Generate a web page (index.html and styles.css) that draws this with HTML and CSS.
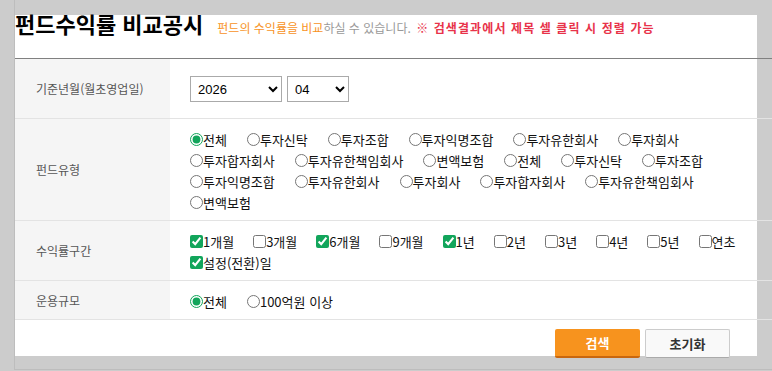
FILE: index.html
```html
<!DOCTYPE html>
<html lang="ko">
<head>
  <meta charset="UTF-8">
  <meta name="viewport" content="width=device-width, initial-scale=1.0">
  <title>펀드수익률 비교공시</title>
  <link rel="stylesheet" href="styles.css">
</head>
<body>
  <div class="frame">
    <div class="panel">
      <div class="head">
        <h1>펀드수익률 비교공시</h1>
        <p class="desc"><span class="hl">펀드의 수익률을 비교</span>하실 수 있습니다. <strong class="note">※ 검색결과에서 제목 셀 클릭 시 정렬 가능</strong></p>
      </div>

      <table class="search-table">
        <tbody>
          <tr class="row-date">
            <th>기준년월(월초영업일)</th>
            <td>
              <div class="selects">
                <select class="sel-year">
                  <option>2026</option>
                  <option>2025</option>
                </select>
                <select class="sel-month">
                  <option>04</option>
                  <option>03</option>
                </select>
              </div>
            </td>
          </tr>
          <tr>
            <th>펀드유형</th>
            <td>
              <div class="opts">
                <label><input type="radio" name="type" checked>전체</label>
                <label><input type="radio" name="type">투자신탁</label>
                <label><input type="radio" name="type">투자조합</label>
                <label><input type="radio" name="type">투자익명조합</label>
                <label><input type="radio" name="type">투자유한회사</label>
                <label><input type="radio" name="type">투자회사</label>
                <label><input type="radio" name="type">투자합자회사</label>
                <label><input type="radio" name="type">투자유한책임회사</label>
                <label><input type="radio" name="type">변액보험</label>
                <label><input type="radio" name="type">전체</label>
                <label><input type="radio" name="type">투자신탁</label>
                <label><input type="radio" name="type">투자조합</label>
                <label><input type="radio" name="type">투자익명조합</label>
                <label><input type="radio" name="type">투자유한회사</label>
                <label><input type="radio" name="type">투자회사</label>
                <label><input type="radio" name="type">투자합자회사</label>
                <label><input type="radio" name="type">투자유한책임회사</label>
                <label><input type="radio" name="type">변액보험</label>
              </div>
            </td>
          </tr>
          <tr>
            <th>수익률구간</th>
            <td>
              <div class="opts opts-check">
                <label><input type="checkbox" checked>1개월</label>
                <label><input type="checkbox">3개월</label>
                <label><input type="checkbox" checked>6개월</label>
                <label><input type="checkbox">9개월</label>
                <label><input type="checkbox" checked>1년</label>
                <label><input type="checkbox">2년</label>
                <label><input type="checkbox">3년</label>
                <label><input type="checkbox">4년</label>
                <label><input type="checkbox">5년</label>
                <label><input type="checkbox">연초</label>
                <label><input type="checkbox" checked>설정(전환)일</label>
              </div>
            </td>
          </tr>
          <tr>
            <th>운용규모</th>
            <td>
              <div class="opts">
                <label><input type="radio" name="size" checked>전체</label>
                <label><input type="radio" name="size">100억원 이상</label>
              </div>
            </td>
          </tr>
        </tbody>
      </table>

      <div class="btns">
        <button type="button" class="btn-search">검색</button>
        <button type="button" class="btn-reset">초기화</button>
      </div>
    </div>
  </div>
</body>
</html>
```

FILE: styles.css
```css
body { margin: 0; background-color: #cccccc; font-family: "Noto Sans CJK KR", "Noto Sans", sans-serif; color: #222; overflow: hidden; }
.frame { margin-left: 14px; height: 354px; padding-top: 15px; border-left: 1px solid #bdbdbd; border-bottom: 1px solid #bdbdbd; }
.panel { width: 742px; height: 341px; background-color: #fff; }

/* 타이틀 */
.head { display: flex; align-items: baseline; height: 43px; border-bottom: 1px solid #808080; width: 757px; }
.head h1 { margin: -7px 0 0; font-size: 22px; line-height: 30px; font-weight: 700; color: #000; white-space: nowrap; }
.desc { margin: 0 0 0 14px; font-size: 12px; color: #999; white-space: nowrap; }
.desc .hl { color: #f7931e; }
.desc .note { color: #e8334a; letter-spacing: 1.1px; margin-left: 2px; }

/* 검색 테이블 */
.search-table { width: 757px; border-collapse: collapse; }
.search-table th, .search-table td { border-bottom: 1px solid #e3e3e3; }
.search-table th { width: 134px; padding: 0 0 0 21px; background-color: #f5f5f5; color: #555; font-size: 12px; font-weight: 400; text-align: left; }
.search-table td { padding: 10px 20px 7px 20px; }
.row-date td { padding: 17px 20px 16px 20px; }

.selects { display: flex; gap: 5px; }
select { height: 26px; border: 1px solid #aaa; border-radius: 0; background-color: #fff; font-family: "Liberation Sans", Arial, sans-serif; font-size: 13px; color: #000; padding: 0 3px; }
.sel-year { width: 92px; }
.sel-month { width: 62px; }

.opts { display: flex; flex-wrap: wrap; column-gap: 20px; font-size: 13px; line-height: 21px; color: #111; }
.opts-check { column-gap: 19px; }
.opts label { display: flex; align-items: center; white-space: nowrap; }
.opts input { margin: 0; width: 13px; height: 13px; accent-color: #12a55b; }

/* 버튼 */
.btns { display: flex; justify-content: flex-end; gap: 5px; padding: 9px 27px 0 0; }
.btns button { height: 29px; font-family: "Noto Sans CJK KR", sans-serif; font-size: 13px; font-weight: 700; cursor: pointer; border-radius: 2px; }
.btn-search { width: 85px; background-color: #f7931e; color: #fff; border: none; border-bottom: 2px solid #c9670e; }
.btn-reset { width: 85px; background-color: #f9f9f9; color: #333; border: 1px solid #ccc; border-bottom-color: #aaa; }
```
